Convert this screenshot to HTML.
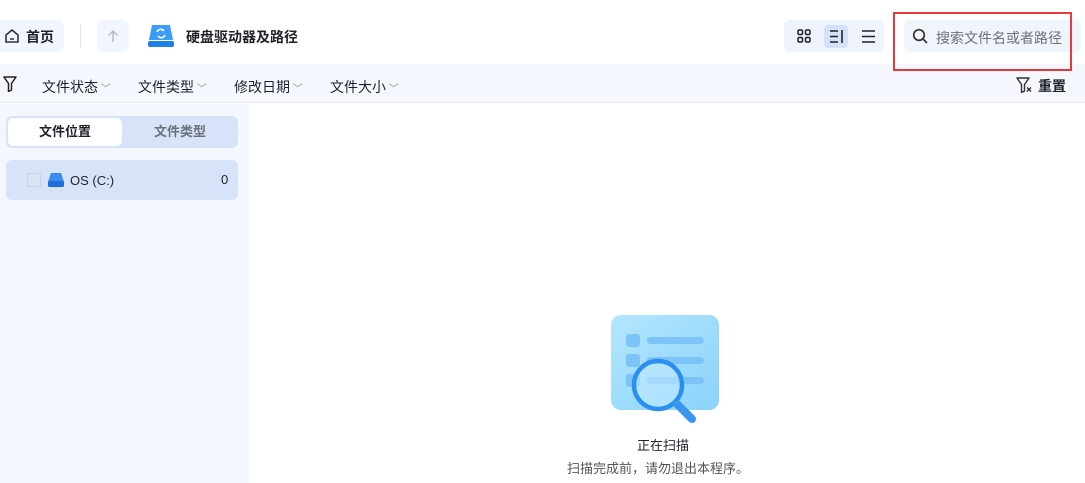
<!DOCTYPE html>
<html><head><meta charset="utf-8"><style>
*{margin:0;padding:0;box-sizing:border-box}
body{width:1085px;height:483px;overflow:hidden;background:#fff;font-family:"Liberation Sans","Noto Sans CJK SC",sans-serif;color:#1f2329;position:relative}
.a{position:absolute}
</style></head><body>
<div class="a" style="left:-4px;top:20px;width:68px;height:32px;background:#f1f5fc;border-radius:7px"></div>
<svg class="a" style="left:4px;top:28px" width="16" height="16" viewBox="0 0 16 16"><path d="M2 7L8 2l6 5v7H2z M6 11h4" fill="none" stroke="#333" stroke-width="1.6" stroke-linejoin="round"/></svg>
<div class="a" style="left:26px;top:27px;font-size:14px;font-weight:bold">首页</div>
<div class="a" style="left:80px;top:24px;width:1px;height:24px;background:#e3e6eb"></div>
<div class="a" style="left:97px;top:20px;width:32px;height:32px;background:#f1f5fc;border-radius:7px"></div>
<svg class="a" style="left:105px;top:28px" width="16" height="16" viewBox="0 0 16 16"><path d="M8 14V3M3.5 7.5L8 3l4.5 4.5" fill="none" stroke="#b8bec8" stroke-width="1.5"/></svg>
<svg class="a" style="left:147px;top:23px" width="28" height="25" viewBox="0 0 28 25"><path d="M5 2h18l3 15H2z" fill="#3b9cf5"/><rect x="1" y="18" width="26" height="6" rx="2" fill="#1f7fe8"/><path d="M10 9a4 4 0 0 1 7-1M18 12a4 4 0 0 1-7 1" stroke="#fff" stroke-width="1.6" fill="none"/></svg>
<div class="a" style="left:186px;top:27px;font-size:14px;font-weight:bold">硬盘驱动器及路径</div>
<div class="a" style="left:784px;top:20px;width:100px;height:32px;background:#eef3fc;border-radius:6px"></div>
<svg class="a" style="left:797px;top:29px" width="14" height="14" viewBox="0 0 14 14" fill="none" stroke="#222" stroke-width="1.5"><rect x="1" y="1" width="4.5" height="4.5" rx="1.2"/><rect x="8.5" y="1" width="4.5" height="4.5" rx="1.2"/><rect x="1" y="8.5" width="4.5" height="4.5" rx="1.2"/><rect x="8.5" y="8.5" width="4.5" height="4.5" rx="1.2"/></svg>
<div class="a" style="left:824px;top:25px;width:24px;height:23px;background:#d3e2f9;border-radius:4px"></div>
<svg class="a" style="left:829px;top:29px" width="15" height="15" viewBox="0 0 15 15" stroke="#222" stroke-width="1.6"><path d="M1 2h8M1 7.5h8M1 13h8M13 1v13"/></svg>
<svg class="a" style="left:861px;top:29px" width="15" height="15" viewBox="0 0 15 15" stroke="#222" stroke-width="1.5"><path d="M1 2h13M1 7.5h13M1 13h13"/></svg>
<div class="a" style="left:904px;top:20px;width:177px;height:32px;background:#f0f4fb;border-radius:6px"></div>
<svg class="a" style="left:912px;top:28px" width="17" height="17" viewBox="0 0 17 17" fill="none" stroke="#333" stroke-width="1.7"><circle cx="7" cy="7" r="5.3"/><path d="M11 11l4 4"/></svg>
<div class="a" style="left:936px;top:28px;font-size:14px;color:#6b717b">搜索文件名或者路径</div>
<div class="a" style="left:0;top:64px;width:1085px;height:39px;background:#f4f7fd;border-bottom:1px solid #e4e8ef"></div>
<div class="a" style="left:893px;top:12px;width:179px;height:59px;border:2px solid #e63a3a;z-index:5"></div>
<svg class="a" style="left:3px;top:76px" width="14" height="16" viewBox="0 0 14 16" fill="none" stroke="#222" stroke-width="1.5" stroke-linejoin="round"><path d="M1 1h12L8.5 7.5v6.5l-3 1.5V7.5z"/></svg>
<div class="a" style="left:42px;top:77px;font-size:14px">文件状态<span style="color:#888;font-size:10px"> ﹀</span></div>
<div class="a" style="left:138px;top:77px;font-size:14px">文件类型<span style="color:#888;font-size:10px"> ﹀</span></div>
<div class="a" style="left:234px;top:77px;font-size:14px">修改日期<span style="color:#888;font-size:10px"> ﹀</span></div>
<div class="a" style="left:330px;top:77px;font-size:14px">文件大小<span style="color:#888;font-size:10px"> ﹀</span></div>
<svg class="a" style="left:1016px;top:77px" width="18" height="16" viewBox="0 0 18 16" fill="none" stroke="#333" stroke-width="1.4" stroke-linejoin="round"><path d="M1 1h12L8.5 7.5v6.5l-3 1.5V7.5z"/><path d="M11 10.5l4 4M15 10.5l-4 4"/></svg>
<div class="a" style="left:1038px;top:76px;font-size:14px;font-weight:bold">重置</div>
<div class="a" style="left:0;top:104px;width:249px;height:379px;background:#f4f7fd"></div>
<div class="a" style="left:6px;top:116px;width:232px;height:32px;background:#d6e3f8;border-radius:6px"></div>
<div class="a" style="left:8px;top:118px;width:114px;height:28px;background:#fff;border-radius:5px;font-size:13px;font-weight:bold;text-align:center;line-height:28px">文件位置</div>
<div class="a" style="left:124px;top:118px;width:112px;height:28px;font-size:13px;font-weight:bold;color:#6b717b;text-align:center;line-height:28px">文件类型</div>
<div class="a" style="left:6px;top:160px;width:232px;height:40px;background:#d6e3f8;border-radius:6px"></div>
<div class="a" style="left:27px;top:173px;width:14px;height:14px;border:1px solid #c8d3e6;background:#d9e3f3;border-radius:2px"></div>
<svg class="a" style="left:48px;top:173px" width="16" height="14" viewBox="0 0 16 14"><path d="M3 0h10l3 9H0z" fill="#3a8cef"/><rect x="0" y="8" width="16" height="6" rx="1.5" fill="#1c6fdc"/></svg>
<div class="a" style="left:70px;top:173px;font-size:13px">OS (C:)</div>
<div class="a" style="left:221px;top:172px;font-size:13px">0</div>
<svg class="a" style="left:610px;top:314px" width="110" height="116" viewBox="0 0 110 116"><defs><linearGradient id="g" x1="0" y1="0" x2="1" y2="1"><stop offset="0" stop-color="#b4e6fd"/><stop offset="1" stop-color="#8ad3fb"/></linearGradient></defs><rect x="1" y="1" width="108" height="95" rx="10" fill="url(#g)"/><g fill="#7cc4f7"><rect x="16" y="20" width="14" height="13" rx="3"/><rect x="16" y="40" width="14" height="13" rx="3"/><rect x="16" y="60" width="14" height="13" rx="3"/><rect x="37" y="23" width="57" height="7" rx="3.5"/><rect x="37" y="43" width="57" height="7" rx="3.5"/><rect x="37" y="63" width="57" height="7" rx="3.5"/></g><circle cx="48" cy="71" r="24" fill="rgba(200,235,255,0.5)" stroke="#2b8ff0" stroke-width="4.5"/><path d="M67 90l15 15" stroke="#3b95f0" stroke-width="8" stroke-linecap="round"/></svg>
<div class="a" style="left:637px;top:435px;font-size:13px">正在扫描</div>
<div class="a" style="left:567px;top:458px;font-size:13px;color:#555">扫描完成前，请勿退出本程序。</div>
</body></html>
